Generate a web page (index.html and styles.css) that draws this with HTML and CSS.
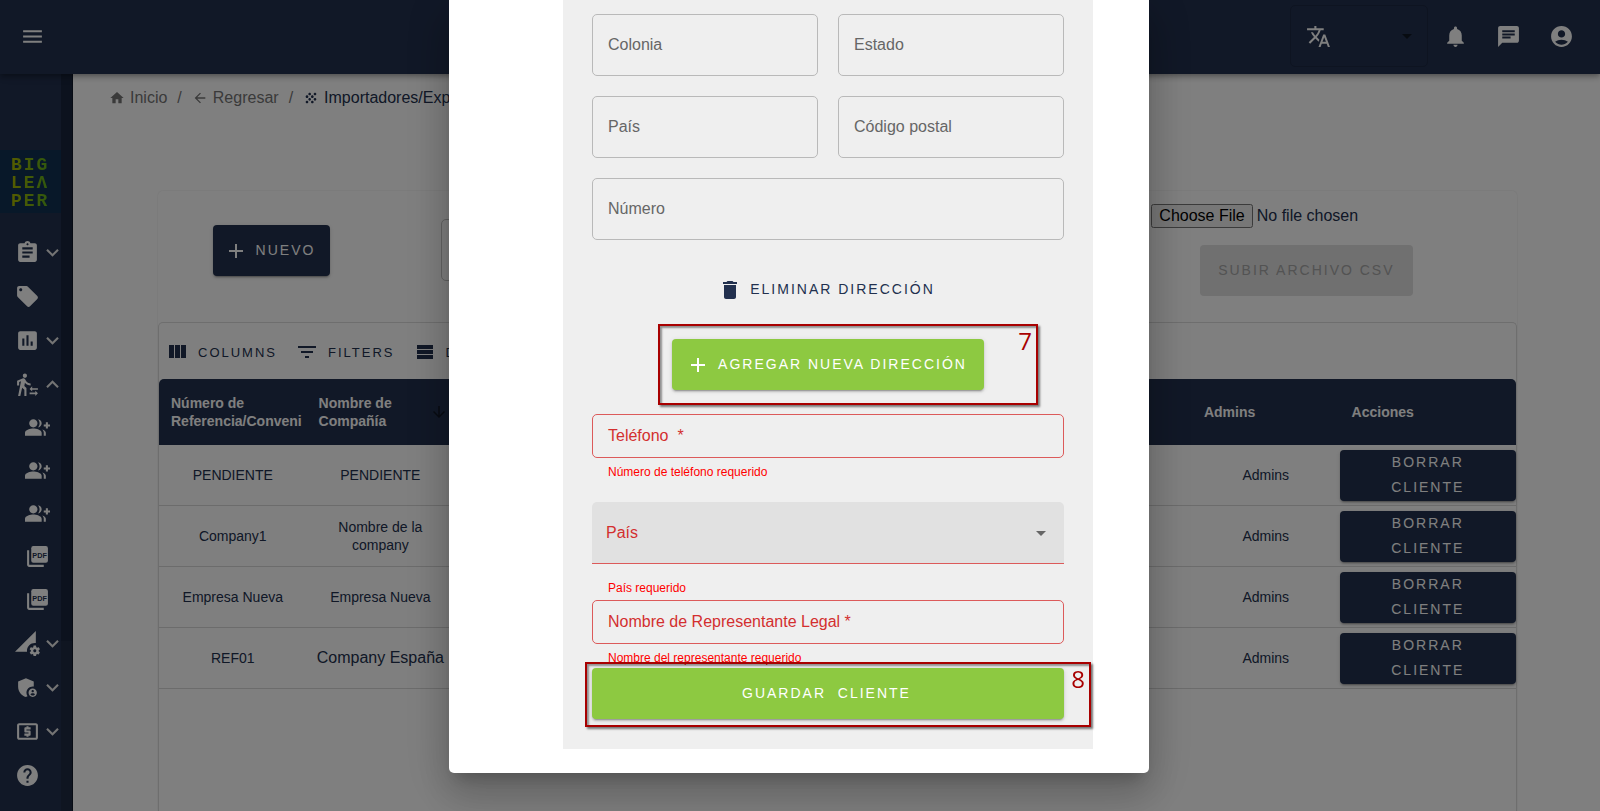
FILE: index.html
```html
<!DOCTYPE html>
<html lang="es">
<head>
    <meta charset="UTF-8">
    <meta name="viewport" content="width=device-width, initial-scale=1.0">
    <title>Importadores/Exportadores</title>
    <link rel="stylesheet" href="styles.css">
</head>
<body>
    <!-- Iconos que se repiten -->
    <svg width="0" height="0" class="sprite" aria-hidden="true">
        <symbol id="down" viewBox="0 0 24 24"><path d="M16.59 8.59 12 13.17 7.41 8.59 6 10l6 6 6-6z"/></symbol>
        <symbol id="up" viewBox="0 0 24 24"><path d="m12 8-6 6 1.41 1.41L12 10.83l4.59 4.58L18 14z"/></symbol>
        <symbol id="caret" viewBox="0 0 24 24"><path d="m7 10 5 5 5-5z"/></symbol>
        <symbol id="plus" viewBox="0 0 24 24"><path d="M19 13h-6v6h-2v-6H5v-2h6V5h2v6h6z"/></symbol>
        <symbol id="group-add" viewBox="0 0 24 24"><path d="M22 9V7h-2v2h-2v2h2v2h2v-2h2V9zM8 12c2.21 0 4-1.79 4-4s-1.79-4-4-4-4 1.79-4 4 1.79 4 4 4m0 1c-2.67 0-8 1.34-8 4v3h16v-3c0-2.66-5.33-4-8-4m4.51-8.95C13.43 5.11 14 6.49 14 8s-.57 2.89-1.49 3.95C14.47 11.7 16 10.04 16 8s-1.53-3.7-3.49-3.95m4.02 9.78C17.42 14.66 18 15.7 18 17v3h2v-3c0-1.45-1.59-2.51-3.47-3.17"/></symbol>
    </svg>

    <header class="topbar">
        <button type="button" class="icon-btn" aria-label="Menú">
            <svg class="icon" viewBox="0 0 24 24"><path d="M3 18h18v-2H3zm0-5h18v-2H3zm0-7v2h18V6z"/></svg>
        </button>
        <div class="topbar-right">
            <div class="lang">
                <svg class="icon" viewBox="0 0 24 24"><path d="m12.87 15.07-2.54-2.51.03-.03c1.74-1.94 2.98-4.17 3.71-6.53H17V4h-7V2H8v2H1v1.99h11.17C11.5 7.92 10.44 9.75 9 11.35 8.07 10.32 7.3 9.19 6.69 8h-2c.73 1.63 1.73 3.17 2.98 4.56l-5.09 5.02L4 19l5-5 3.11 3.11zM18.5 10h-2L12 22h2l1.12-3h4.75L21 22h2zm-2.62 7 1.62-4.33L19.12 17z"/></svg>
                <select aria-label="Idioma"><option></option></select>
                <svg class="icon caret"><use href="#caret"/></svg>
            </div>
            <button type="button" class="icon-btn" aria-label="Notificaciones">
                <svg class="icon" viewBox="0 0 24 24"><path d="M12 22c1.1 0 2-.9 2-2h-4c0 1.1.89 2 2 2m6-6v-5c0-3.07-1.64-5.64-4.5-6.32V4c0-.83-.67-1.5-1.5-1.5s-1.5.67-1.5 1.5v.68C7.63 5.36 6 7.92 6 11v5l-2 2v1h16v-1z"/></svg>
            </button>
            <button type="button" class="icon-btn" aria-label="Mensajes">
                <svg class="icon" viewBox="0 0 24 24"><path d="M20 2H4c-1.1 0-1.99.9-1.99 2L2 22l4-4h14c1.1 0 2-.9 2-2V4c0-1.1-.9-2-2-2M6 9h12v2H6zm8 5H6v-2h8zm4-6H6V6h12z"/></svg>
            </button>
            <button type="button" class="icon-btn" aria-label="Cuenta">
                <svg class="icon" viewBox="0 0 24 24"><path d="M12 2C6.48 2 2 6.48 2 12s4.48 10 10 10 10-4.48 10-10S17.52 2 12 2m0 4c1.93 0 3.5 1.57 3.5 3.5S13.93 13 12 13s-3.5-1.57-3.5-3.5S10.07 6 12 6m0 14c-2.03 0-4.43-.82-6.14-2.88C7.55 15.8 9.68 15 12 15s4.45.8 6.14 2.12C16.43 19.18 14.03 20 12 20"/></svg>
            </button>
        </div>
    </header>

    <div class="layout">
        <aside class="sidebar">
            <nav class="menu">
                <div class="logo"><span>BIG</span><span>LEΛ</span><span>PER</span></div>
                <a href="#" class="item" aria-label="Pedimentos">
                    <svg class="icon" viewBox="0 0 24 24"><path d="M19 3h-4.18C14.4 1.84 13.3 1 12 1c-1.3 0-2.4.84-2.82 2H5c-1.1 0-2 .9-2 2v14c0 1.1.9 2 2 2h14c1.1 0 2-.9 2-2V5c0-1.1-.9-2-2-2m-7 0c.55 0 1 .45 1 1s-.45 1-1 1-1-.45-1-1 .45-1 1-1m2 14H7v-2h7zm3-4H7v-2h10zm0-4H7V7h10z"/></svg>
                    <svg class="icon"><use href="#down"/></svg>
                </a>
                <a href="#" class="item" aria-label="Etiquetas">
                    <svg class="icon" viewBox="0 0 24 24"><path d="m21.41 11.58-9-9C12.05 2.22 11.55 2 11 2H4c-1.1 0-2 .9-2 2v7c0 .55.22 1.05.59 1.42l9 9c.36.36.86.58 1.41.58s1.05-.22 1.41-.59l7-7c.37-.36.59-.86.59-1.41s-.23-1.06-.59-1.42M5.5 7C4.67 7 4 6.33 4 5.5S4.67 4 5.5 4 7 4.67 7 5.5 6.33 7 5.5 7"/></svg>
                </a>
                <a href="#" class="item" aria-label="Reportes">
                    <svg class="icon" viewBox="0 0 24 24"><path d="M19 3H5c-1.1 0-2 .9-2 2v14c0 1.1.9 2 2 2h14c1.1 0 2-.9 2-2V5c0-1.1-.9-2-2-2M9 17H7v-7h2zm4 0h-2V7h2zm4 0h-2v-4h2z"/></svg>
                    <svg class="icon"><use href="#down"/></svg>
                </a>
                <a href="#" class="item" aria-label="Importadores/Exportadores">
                    <svg class="icon" viewBox="0 0 24 24"><path d="M16.49 15.5v-1.75L14 16.25l2.49 2.5V17H22v-1.5zm3.02 4.25H14v1.5h5.51V23L22 20.5 19.51 18zM9.5 5.5c1.1 0 2-.9 2-2s-.9-2-2-2-2 .9-2 2 .9 2 2 2M5.75 8.9 3 23h2.1l1.75-8L9 17v6h2v-7.55L8.95 13.4l.6-3C10.85 12 12.8 13 15 13v-2c-1.85 0-3.45-1-4.35-2.45l-.95-1.6C9.35 6.35 8.7 6 8 6c-.25 0-.5.05-.75.15L2 8.3V13h2V9.65z"/></svg>
                    <svg class="icon"><use href="#up"/></svg>
                </a>
                <a href="#" class="item sub" aria-label="Clientes"><svg class="icon"><use href="#group-add"/></svg></a>
                <a href="#" class="item sub" aria-label="Proveedores"><svg class="icon"><use href="#group-add"/></svg></a>
                <a href="#" class="item sub" aria-label="Usuarios"><svg class="icon"><use href="#group-add"/></svg></a>
                <a href="#" class="item sub" aria-label="Documentos">
                    <svg class="icon" viewBox="0 0 24 24"><rect x="6" y="2" width="16" height="16" rx="2"/><path d="M4 6H2v14c0 1.1.9 2 2 2h14v-2H4z"/><text x="14" y="13" class="pdf">PDF</text></svg>
                </a>
                <a href="#" class="item sub" aria-label="Formatos">
                    <svg class="icon" viewBox="0 0 24 24"><rect x="6" y="2" width="16" height="16" rx="2"/><path d="M4 6H2v14c0 1.1.9 2 2 2h14v-2H4z"/><text x="14" y="13" class="pdf">PDF</text></svg>
                </a>
                <a href="#" class="item" aria-label="Configuración">
                    <svg class="icon" viewBox="0 0 24 24"><path d="M18.99 11.5c.34 0 .67.03 1 .07L20 0 0 20h11.56c-.04-.33-.07-.66-.07-1 0-4.14 3.36-7.5 7.5-7.5m3.71 7.99c.02-.16.04-.32.04-.49s-.01-.33-.04-.49l1.06-.83c.09-.08.12-.21.06-.32l-1-1.73c-.06-.11-.19-.15-.31-.11l-1.24.5c-.26-.2-.54-.37-.85-.49l-.19-1.32c-.01-.12-.12-.21-.24-.21h-2c-.12 0-.23.09-.25.21l-.19 1.32c-.3.13-.59.29-.85.49l-1.24-.5c-.11-.04-.24 0-.31.11l-1 1.73c-.06.11-.04.24.06.32l1.06.83c-.02.16-.03.32-.03.49s.01.33.03.49l-1.06.83c-.09.08-.12.21-.06.32l1 1.73c.06.11.19.15.31.11l1.24-.5c.26.2.54.37.85.49l.19 1.32c.02.12.12.21.25.21h2c.12 0 .23-.09.25-.21l.19-1.32c.3-.13.59-.29.84-.49l1.25.5c.11.04.24 0 .31-.11l1-1.73c.06-.11.03-.24-.06-.32zm-3.71 1.01c-.83 0-1.5-.67-1.5-1.5s.67-1.5 1.5-1.5 1.5.67 1.5 1.5-.67 1.5-1.5 1.5"/></svg>
                    <svg class="icon"><use href="#down"/></svg>
                </a>
                <a href="#" class="item" aria-label="Administración">
                    <svg class="icon" viewBox="0 0 24 24"><path d="M17 11c.34 0 .67.04 1 .09V6.27L10.5 3 3 6.27v4.91c0 4.54 3.2 8.79 7.5 9.82.55-.13 1.08-.32 1.6-.55-.69-.98-1.1-2.17-1.1-3.45 0-3.31 2.69-6 6-6"/><path d="M17 13c-2.21 0-4 1.79-4 4s1.79 4 4 4 4-1.79 4-4-1.79-4-4-4m0 1.38c.62 0 1.12.51 1.12 1.12s-.51 1.12-1.12 1.12-1.12-.51-1.12-1.12.5-1.12 1.12-1.12m0 5.37c-.93 0-1.74-.46-2.24-1.17.05-.72 1.51-1.08 2.24-1.08s2.19.36 2.24 1.08c-.5.71-1.31 1.17-2.24 1.17"/></svg>
                    <svg class="icon"><use href="#down"/></svg>
                </a>
                <a href="#" class="item" aria-label="Pagos">
                    <svg class="icon" viewBox="0 0 24 24"><path d="M11 17h2v-1h1c.55 0 1-.45 1-1v-3c0-.55-.45-1-1-1h-3v-1h4V8h-2V7h-2v1h-1c-.55 0-1 .45-1 1v3c0 .55.45 1 1 1h3v1H9v2h2zm9-13H4c-1.11 0-1.99.89-1.99 2L2 18c0 1.11.89 2 2 2h16c1.11 0 2-.89 2-2V6c0-1.11-.89-2-2-2m0 14H4V6h16z"/></svg>
                    <svg class="icon"><use href="#down"/></svg>
                </a>
                <a href="#" class="item" aria-label="Ayuda">
                    <svg class="icon" viewBox="0 0 24 24"><path d="M12 2C6.48 2 2 6.48 2 12s4.48 10 10 10 10-4.48 10-10S17.52 2 12 2m1 17h-2v-2h2zm2.07-7.75-.9.92C13.45 12.9 13 13.5 13 15h-2v-.5c0-1.1.45-2.1 1.17-2.83l1.24-1.26c.37-.36.59-.86.59-1.41 0-1.1-.9-2-2-2s-2 .9-2 2H8c0-2.21 1.79-4 4-4s4 1.79 4 4c0 .88-.36 1.68-.93 2.25"/></svg>
                </a>
                <a href="#" class="item" aria-label="Mi cuenta">
                    <svg class="icon" viewBox="0 0 24 24"><circle cx="10" cy="8" r="4"/><path d="M2 20v-3c0-2 4-4 8-4v7z"/></svg>
                </a>
            </nav>
            <div class="scroll-track"><div class="scroll-thumb"></div></div>
        </aside>

        <main class="content">
            <nav class="breadcrumbs" aria-label="Ruta">
                <a href="#"><svg viewBox="0 0 24 24"><path d="M10 20v-6h4v6h5v-8h3L12 3 2 12h3v8z"/></svg>Inicio</a>
                <span>/</span>
                <a href="#"><svg viewBox="0 0 24 24"><path d="M20 11H7.83l5.59-5.59L12 4l-8 8 8 8 1.41-1.41L7.83 13H20z"/></svg>Regresar</a>
                <span>/</span>
                <a href="#" class="current"><svg viewBox="0 0 24 24"><path d="M10 12c-1.1 0-2 .9-2 2s.9 2 2 2 2-.9 2-2-.9-2-2-2M6 8c-1.1 0-2 .9-2 2s.9 2 2 2 2-.9 2-2-.9-2-2-2m0 8c-1.1 0-2 .9-2 2s.9 2 2 2 2-.9 2-2-.9-2-2-2m12-8c1.1 0 2-.9 2-2s-.9-2-2-2-2 .9-2 2 .9 2 2 2m-4 8c-1.1 0-2 .9-2 2s.9 2 2 2 2-.9 2-2-.9-2-2-2m4-4c-1.1 0-2 .9-2 2s.9 2 2 2 2-.9 2-2-.9-2-2-2m-4-4c-1.1 0-2 .9-2 2s.9 2 2 2 2-.9 2-2-.9-2-2-2m-4-4c-1.1 0-2 .9-2 2s.9 2 2 2 2-.9 2-2-.9-2-2-2"/></svg>Importadores/Exportadores</a>
            </nav>

            <section class="card">
                <div class="actions">
                    <div class="action-new">
                        <button type="button" class="btn navy"><svg><use href="#plus"/></svg>Nuevo</button>
                    </div>
                    <div class="action-search"><input type="text" aria-label="Buscar"></div>
                    <div class="action-upload">
                        <input type="file" aria-label="Archivo CSV">
                        <button type="button" class="btn disabled" disabled>Subir archivo csv</button>
                    </div>
                </div>

                <div class="grid-panel">
                    <div class="grid-toolbar">
                        <button type="button"><svg viewBox="0 0 24 24"><path d="M10 18h5V5h-5zm-6 0h5V5H4zM16 5v13h5V5z"/></svg>Columns</button>
                        <button type="button"><svg viewBox="0 0 24 24"><path d="M10 18h4v-2h-4zM3 6v2h18V6zm3 7h12v-2H6z"/></svg>Filters</button>
                        <button type="button"><svg viewBox="0 0 24 24"><path d="M4 5h16v4H4zm0 5h16v4H4zm0 5h16v4H4z"/></svg>Density</button>
                    </div>
                    <table>
                        <thead>
                            <tr>
                                <th>Número de Referencia/Conveni</th>
                                <th>
                                    <div class="sorted">Nombre de Compañía
                                        <svg viewBox="0 0 24 24"><path d="m20 12-1.41-1.41L13 16.17V4h-2v12.17l-5.58-5.59L4 12l8 8z"/></svg>
                                    </div>
                                </th>
                                <th></th><th></th><th></th><th></th><th></th>
                                <th>Admins</th>
                                <th class="last">Acciones</th>
                            </tr>
                        </thead>
                        <tbody>
                            <tr>
                                <td>PENDIENTE</td><td>PENDIENTE</td>
                                <td></td><td></td><td></td><td></td><td></td>
                                <td>Admins</td>
                                <td class="last"><button type="button" class="btn navy delete">Borrar cliente</button></td>
                            </tr>
                            <tr>
                                <td>Company1</td><td>Nombre de la company</td>
                                <td></td><td></td><td></td><td></td><td></td>
                                <td>Admins</td>
                                <td class="last"><button type="button" class="btn navy delete">Borrar cliente</button></td>
                            </tr>
                            <tr>
                                <td>Empresa Nueva</td><td>Empresa Nueva</td>
                                <td></td><td></td><td></td><td></td><td></td>
                                <td>Admins</td>
                                <td class="last"><button type="button" class="btn navy delete">Borrar cliente</button></td>
                            </tr>
                            <tr>
                                <td>REF01</td><td class="big">Company España</td>
                                <td></td><td></td><td></td><td></td><td></td>
                                <td>Admins</td>
                                <td class="last"><button type="button" class="btn navy delete">Borrar cliente</button></td>
                            </tr>
                        </tbody>
                    </table>
                </div>
            </section>
        </main>
    </div>

    <div class="backdrop">
        <div class="modal" role="dialog" aria-label="Nuevo cliente">
            <form class="panel">
                <div class="address">
                    <div class="field"><input type="text" id="colonia"><label for="colonia">Colonia</label></div>
                    <div class="field"><input type="text" id="estado"><label for="estado">Estado</label></div>
                    <div class="field"><input type="text" id="pais-dir"><label for="pais-dir">País</label></div>
                    <div class="field"><input type="text" id="cp"><label for="cp">Código postal</label></div>
                    <div class="field wide"><input type="text" id="numero"><label for="numero">Número</label></div>
                </div>

                <button type="button" class="btn text"><svg viewBox="0 0 24 24"><path d="M6 19c0 1.1.9 2 2 2h8c1.1 0 2-.9 2-2V7H6zM19 4h-3.5l-1-1h-5l-1 1H5v2h14z"/></svg>Eliminar dirección</button>

                <div class="marked add">
                    <button type="button" class="btn green"><svg><use href="#plus"/></svg>Agregar nueva dirección</button>
                    <div class="callout"><span>7</span></div>
                </div>

                <div class="field small error"><input type="tel" id="telefono"><label for="telefono">Teléfono &nbsp;*</label></div>
                <p class="helper">Número de teléfono requerido</p>

                <div class="field select error">
                    <select id="pais"><option></option></select>
                    <label for="pais">País</label>
                    <svg class="caret"><use href="#caret"/></svg>
                </div>
                <p class="helper">País requerido</p>

                <div class="field small error legal"><input type="text" id="legal"><label for="legal">Nombre de Representante Legal *</label></div>
                <p class="helper">Nombre del representante requerido</p>

                <div class="marked save">
                    <button type="submit" class="btn green">Guardar &nbsp;cliente</button>
                    <div class="callout"><span>8</span></div>
                </div>
            </form>
        </div>
    </div>
</body>
</html>
```
FILE: styles.css
```css
* {
    box-sizing: border-box;
}
body {
    margin: 0;
    height: 100vh;
    overflow: hidden;
    display: flex;
    flex-direction: column;
    background-color: #fff;
    color: #22304e;
    font-family: "Liberation Sans", Arial, sans-serif;
    font-size: 16px;
}
button, input, select {
    font-family: inherit;
}
svg {
    fill: currentColor;
    flex-shrink: 0;
}
.sprite {
    position: absolute;
}
.icon {
    width: 25px;
    height: 25px;
}

/* Barra superior */
.topbar {
    position: relative;
    z-index: 2;
    flex-shrink: 0;
    height: 74px;
    padding: 0 26px 2px 20px;
    display: flex;
    align-items: center;
    justify-content: space-between;
    background-color: #22304e;
    color: #fff;
    box-shadow: 0 2px 4px -1px rgba(0, 0, 0, 0.2), 0 4px 5px rgba(0, 0, 0, 0.14), 0 1px 10px rgba(0, 0, 0, 0.12);
}
.topbar-right {
    display: flex;
    align-items: center;
    gap: 28px;
}
.icon-btn {
    display: flex;
    padding: 0;
    border: none;
    background: none;
    color: inherit;
    cursor: pointer;
}
.lang {
    position: relative;
    display: flex;
    align-items: center;
    width: 138px;
    height: 62px;
    margin-right: -13px;
    padding-left: 15px;
    border: 1px solid rgba(0, 0, 0, 0.15);
    border-radius: 5px;
}
.lang select {
    flex: 1;
    height: 100%;
    appearance: none;
    border: none;
    background: none;
}
.caret {
    position: absolute;
    right: 8px;
    width: 24px;
    height: 24px;
    pointer-events: none;
}
.lang .caret {
    color: rgba(0, 0, 0, 0.54);
}

/* Menú lateral */
.layout {
    flex: 1;
    min-height: 0;
    display: flex;
}
.sidebar {
    display: flex;
    width: 73px;
    flex-shrink: 0;
    background-color: #22304e;
    color: #fff;
}
.menu {
    width: 61px;
    padding-top: 76px;
    overflow: hidden;
}
.logo {
    display: flex;
    flex-direction: column;
    height: 63px;
    margin-bottom: 17px;
    padding: 6px 0 0 11px;
    background-color: #103052;
    font: bold 18px/18px "Liberation Mono", monospace;
    letter-spacing: 2px;
}
.logo span {
    width: 42px;
    background: linear-gradient(90deg, #aab800, #58b020);
    background-clip: text;
    color: transparent;
}
.item {
    display: flex;
    align-items: center;
    height: 44px;
    padding-left: 15px;
    color: inherit;
}
.item .icon + .icon {
    color: #e8e8e8;
}
.item.sub {
    height: 43px;
    padding-left: 25px;
}
.pdf {
    font: bold 7px "Liberation Sans", Arial, sans-serif;
    text-anchor: middle;
    fill: #22304e;
}
.scroll-track {
    width: 12px;
    background-color: #1f2a42;
    border-right: 1px solid #101828;
}
.scroll-thumb {
    height: 77%;
    background-color: #18243c;
}

/* Contenido */
.content {
    flex: 1;
    min-width: 0;
    display: flex;
    flex-direction: column;
    padding: 14px 83px 0 36px;
}
.breadcrumbs {
    display: flex;
    align-items: center;
    gap: 10px;
    height: 20px;
    color: #757575;
}
.breadcrumbs a {
    display: flex;
    align-items: center;
    gap: 5px;
    color: inherit;
    text-decoration: none;
}
.breadcrumbs svg {
    width: 16px;
    height: 16px;
}
.breadcrumbs .current {
    color: #22304e;
}
.card {
    flex: 1;
    display: flex;
    flex-direction: column;
    margin: 83px 0 0 49px;
    border-radius: 5px 5px 0 0;
    box-shadow: 0 0 2px rgba(0, 0, 0, 0.12);
}
.actions {
    display: grid;
    grid-template-columns: 17% 1fr 31%;
    height: 131px;
}
.action-new {
    padding: 34px 4px 0 0;
    text-align: center;
}
.action-search {
    padding: 28px 52px 0;
}
.action-search input {
    width: 100%;
    height: 62px;
    border: 1px solid #c4c4c4;
    border-radius: 5px;
}
.action-upload {
    display: flex;
    flex-direction: column;
    align-items: center;
    gap: 17px;
    padding-top: 13px;
}
.action-upload input {
    width: 310px;
    height: 24px;
    font-size: 16px;
}

/* Botones */
.btn {
    display: inline-flex;
    align-items: center;
    justify-content: center;
    gap: 8px;
    min-height: 51px;
    padding: 0 17px 0 14px;
    border: none;
    border-radius: 4px;
    font-size: 14px;
    line-height: 25px;
    letter-spacing: 2px;
    text-transform: uppercase;
    cursor: pointer;
}
.btn svg {
    width: 24px;
    height: 24px;
}
.btn.navy, .btn.green {
    color: #fff;
    box-shadow: 0 3px 1px -2px rgba(0, 0, 0, 0.2), 0 2px 2px rgba(0, 0, 0, 0.14), 0 1px 5px rgba(0, 0, 0, 0.12);
}
.btn.navy {
    background-color: #22304e;
}
.btn.green {
    background-color: #8dc941;
}
.btn.disabled {
    padding: 0 18px;
    background-color: #e0e0e0;
    color: #a6a6a6;
}
.btn.text {
    background: none;
    color: #22304e;
}
.action-new .btn {
    padding: 0 15px 0 11px;
}
.btn.delete {
    width: 100%;
    padding: 0 45px;
}

/* Tabla */
.grid-panel {
    flex: 1;
    border: 1px solid #dcdcdc;
    border-bottom: none;
    border-radius: 5px 5px 0 0;
}
.grid-toolbar {
    display: flex;
    align-items: center;
    gap: 18px;
    height: 56px;
    padding: 2px 0 0 6px;
}
.grid-toolbar button {
    display: flex;
    align-items: center;
    gap: 9px;
    padding: 0;
    border: none;
    background: none;
    color: #22304e;
    font-size: 13px;
    letter-spacing: 2px;
    text-transform: uppercase;
}
.grid-toolbar svg {
    width: 24px;
    height: 24px;
}
table {
    width: 100%;
    table-layout: fixed;
    border-collapse: separate;
    border-spacing: 0;
    font-size: 14px;
    line-height: 18px;
}
th {
    height: 66px;
    padding: 0 12px;
    background-color: #22304e;
    color: #fff;
    text-align: left;
}
th:first-child {
    border-top-left-radius: 5px;
}
th:last-child {
    border-top-right-radius: 5px;
}
.last {
    width: 13%;
}
.sorted {
    display: flex;
    align-items: center;
    justify-content: space-between;
    margin-right: -6px;
}
.sorted svg {
    width: 18px;
    height: 18px;
    color: rgba(0, 0, 0, 0.54);
}
td {
    height: 61px;
    padding: 0 12px;
    border-bottom: 1px solid #d8d8d8;
    text-align: center;
}
td.big {
    padding: 0;
    font-size: 16px;
}
td.last {
    padding: 0;
}

/* Ventana del cliente */
.backdrop {
    position: fixed;
    inset: 0;
    z-index: 10;
    display: flex;
    align-items: flex-start;
    justify-content: center;
    padding-right: 2px;
    background-color: rgba(0, 0, 0, 0.5);
}
.modal {
    width: 700px;
    padding: 0 56px 24px 114px;
    background-color: #fff;
    border-radius: 0 0 5px 5px;
    box-shadow: 0 11px 15px -7px rgba(0, 0, 0, 0.2), 0 24px 38px 3px rgba(0, 0, 0, 0.14), 0 9px 46px 8px rgba(0, 0, 0, 0.12);
}
.panel {
    display: flex;
    flex-direction: column;
    padding: 14px 29px 30px;
    background-color: #efefef;
}
.address {
    display: grid;
    grid-template-columns: 1fr 1fr;
    gap: 20px;
}
.wide {
    grid-column: span 2;
}
.field {
    position: relative;
    display: flex;
    align-items: center;
    height: 62px;
    color: #666;
}
.field input, .field select {
    width: 100%;
    height: 100%;
    padding: 0 16px;
    border: 1px solid #b9b9b9;
    border-radius: 5px;
    background: none;
    font-size: 16px;
}
.field label {
    position: absolute;
    left: 16px;
    pointer-events: none;
}
.field.small {
    height: 44px;
}
.field.error {
    color: #d32f2f;
}
.field.error input {
    border-color: #dc5a5a;
}
.field.legal {
    margin-top: 2px;
}
.field.select {
    margin: 20px 0 10px;
}
.field.select select {
    appearance: none;
    border: none;
    border-bottom: 1px solid #dc5a5a;
    border-radius: 5px 5px 0 0;
    background-color: #e1e1e1;
}
.field.select label {
    left: 14px;
}
.field.select .caret {
    right: 11px;
    color: #666;
}
.helper {
    margin: 4px 0 0 16px;
    color: #f00;
    font-size: 12px;
    line-height: 20px;
}
.btn.text {
    align-self: center;
    margin: 24px 0;
}
.marked {
    position: relative;
    display: flex;
}
.marked.add {
    align-self: center;
    margin-bottom: 24px;
}
.marked.save .btn {
    flex: 1;
}

/* Recuadros de la guía */
.callout {
    position: absolute;
    border: 2px solid #a80000;
    box-shadow: 2px 2px 2px rgba(0, 0, 0, 0.5), inset 2px 2px 2px rgba(0, 0, 0, 0.4);
    color: #a80000;
    font: 24px/30px "Open Sans", sans-serif;
    text-align: right;
    pointer-events: none;
}
.callout span {
    padding-right: 4px;
}
.add .callout {
    inset: -15px -54px -15px -14px;
}
.save .callout {
    inset: -6px -27px -8px -7px;
}
```
